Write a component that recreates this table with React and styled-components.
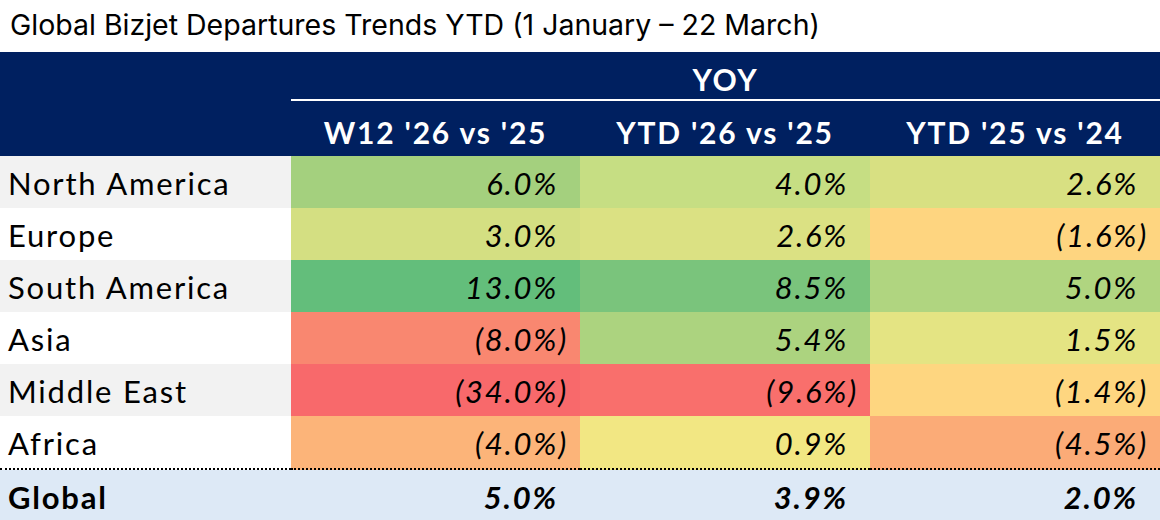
import React from 'react';
import styled, {createGlobalStyle} from "styled-components";

const Global = createGlobalStyle`
  html, body {
    margin: 0;
    padding: 0;
    background: #ffffff;
  }
`

const Page = styled.div`
  width: 1160px;
  height: 520px;
  overflow: hidden;
  background: #fff;
`

const Title = styled.div`
  height: 52px;
  padding-left: 10px;
  font-family: Inter, "Open Sans", sans-serif;
  font-size: 28.5px;
  line-height: 50px;
  color: #000;
  white-space: nowrap;
`

const Table = styled.div`
  display: grid;
  grid-template-columns: 291px 289px 290px 290px;
  font-family: Lato, "Open Sans", sans-serif;
  letter-spacing: 1.8px;
`

const HeadBlank = styled.div`
  background: #002060;
  grid-row: span 2;
`

const Yoy = styled.div`
  grid-column: span 3;
  background: #002060;
  color: #fff;
  font-weight: 700;
  font-size: 30px;
  height: 47px;
  line-height: 55px;
  text-align: center;
  border-bottom: 2px solid #fff;
`

const SubHead = styled.div`
  background: #002060;
  color: #fff;
  font-weight: 700;
  font-size: 30px;
  height: 55px;
  line-height: 62px;
  text-align: center;
  white-space: nowrap;
`

const Label = styled.div`
  height: ${p => p.$last ? '50px' : '52px'};
  line-height: 55px;
  padding-left: 8px;
  font-size: 31px;
  font-weight: ${p => p.$bold ? 700 : 400};
  background: ${p => p.$bg};
  color: #000;
  border-bottom: ${p => p.$dotted ? '2px dotted #000' : 'none'};
  white-space: nowrap;
`

const Value = styled.div`
  height: ${p => p.$last ? '50px' : '52px'};
  line-height: 55px;
  padding-right: 12px;
  text-align: right;
  font-size: 31px;
  font-style: italic;
  font-weight: ${p => p.$bold ? 700 : 400};
  background: ${p => p.$bg};
  color: #000;
  border-bottom: ${p => p.$dotted ? '2px dotted #000' : 'none'};
  white-space: nowrap;
`

const Pad = styled.span`
  visibility: hidden;
`

const rows = [
  {name: 'North America', bg: '#f2f2f2', vals: [['6.0%', '#a4d07e'], ['4.0%', '#c6de83'], ['2.6%', '#d8e082']]},
  {name: 'Europe', bg: '#ffffff', vals: [['3.0%', '#d4df82'], ['2.6%', '#dbe183'], ['(1.6%)', '#fed580']]},
  {name: 'South America', bg: '#f2f2f2', vals: [['13.0%', '#63be7b'], ['8.5%', '#7ac47c'], ['5.0%', '#b0d580']]},
  {name: 'Asia', bg: '#ffffff', vals: [['(8.0%)', '#f98770'], ['5.4%', '#acd37f'], ['1.5%', '#e4e483']]},
  {name: 'Middle East', bg: '#f2f2f2', vals: [['(34.0%)', '#f8696b'], ['(9.6%)', '#f96f6c'], ['(1.4%)', '#fed680']]},
  {name: 'Africa', bg: '#ffffff', vals: [['(4.0%)', '#fcb479'], ['0.9%', '#f2e783'], ['(4.5%)', '#fbab77']]},
]

const Num = ({v}) => v.startsWith('(') ? v : <>{v}<Pad>)</Pad></>

const App = () => {
  return <Page>
    <Global/>
    <Title>Global Bizjet Departures Trends YTD (1 January – 22 March)</Title>
    <Table>
      <HeadBlank/>
      <Yoy>YOY</Yoy>
      <SubHead>W12 '26 vs '25</SubHead>
      <SubHead>YTD '26 vs '25</SubHead>
      <SubHead>YTD '25 vs '24</SubHead>
      {rows.map((r, i) => {
        const dotted = i === rows.length - 1
        return <React.Fragment key={r.name}>
          <Label $bg={r.bg} $dotted={dotted}>{r.name}</Label>
          {r.vals.map(([v, c], j) => <Value key={j} $bg={c} $dotted={dotted}><Num v={v}/></Value>)}
        </React.Fragment>
      })}
      <Label $bg="#dde9f6" $bold $last>Global</Label>
      <Value $bg="#dde9f6" $bold $last><Num v="5.0%"/></Value>
      <Value $bg="#dde9f6" $bold $last><Num v="3.9%"/></Value>
      <Value $bg="#dde9f6" $bold $last><Num v="2.0%"/></Value>
    </Table>
  </Page>
}

export default App;
